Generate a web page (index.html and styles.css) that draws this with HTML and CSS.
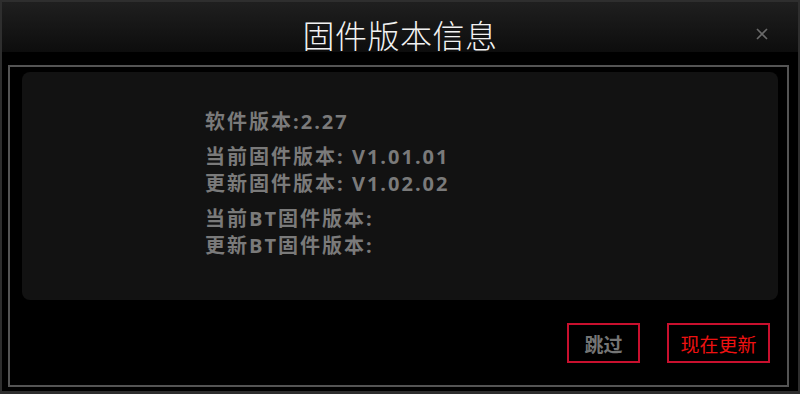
FILE: index.html
```html
<!DOCTYPE html>
<html lang="zh-CN">
<head>
  <meta charset="UTF-8">
  <meta name="viewport" content="width=device-width, initial-scale=1.0">
  <title>固件版本信息</title>
  <link rel="stylesheet" href="styles.css">
</head>
<body>
  <div class="window">
    <div class="header">
      <h1 class="title">固件版本信息</h1>
      <div class="close-btn">
        <svg width="12" height="12" viewBox="0 0 12 12">
          <path d="M1 1 L11 11 M11 1 L1 11" stroke="#6a6a6a" stroke-width="1.6" fill="none"/>
        </svg>
      </div>
    </div>
    <div class="frame">
      <div class="panel">
        <div class="info">
          <div class="group">
            <div class="line">软件版本:2.27</div>
          </div>
          <div class="group">
            <div class="line">当前固件版本: V1.01.01</div>
            <div class="line">更新固件版本: V1.02.02</div>
          </div>
          <div class="group">
            <div class="line">当前BT固件版本:</div>
            <div class="line">更新BT固件版本:</div>
          </div>
        </div>
      </div>
      <div class="actions">
        <button class="btn btn-skip">跳过</button>
        <button class="btn btn-update">现在更新</button>
      </div>
    </div>
  </div>
</body>
</html>
```

FILE: styles.css
```css
body {
  margin: 0;
  background-color: #000;
  font-family: "Noto Sans CJK SC", "Noto Sans", sans-serif;
}
.window {
  width: 800px;
  height: 394px;
  box-sizing: border-box;
  border: 2px solid #2e2e2e;
  border-bottom-width: 3px;
  background-color: #000;
  display: flex;
  flex-direction: column;
}
.header {
  height: 50px;
  position: relative;
  background: linear-gradient(#1f1f1f, #0d0d0d);
  display: flex;
  justify-content: center;
}
.title {
  margin: 0;
  padding-top: 12px;
  font-size: 32px;
  font-weight: 300;
  line-height: 40px;
  letter-spacing: 0.5px;
  color: #f2f2f2;
}
.close-btn {
  position: absolute;
  right: 30px;
  top: 26px;
  width: 12px;
  height: 12px;
}
.close-btn svg {
  display: block;
}
.frame {
  margin: 13px 9px 4px 6px;
  flex: 1;
  border: 2px solid #545454;
  display: flex;
  flex-direction: column;
}
.panel {
  margin: 5px 9px 0 12px;
  height: 228px;
  box-sizing: border-box;
  background-color: #121212;
  border-radius: 8px;
  padding: 36px 0 0 183px;
}
.info {
  display: flex;
  flex-direction: column;
  gap: 8px;
}
.line {
  font-family: "Open Sans", "Noto Sans CJK SC", sans-serif;
  font-size: 20px;
  font-weight: 700;
  line-height: 27px;
  letter-spacing: 2px;
  color: #7a7a7a;
}
.actions {
  display: flex;
  justify-content: flex-end;
  gap: 27px;
  margin: 23px 17px 0 0;
}
.btn {
  height: 40px;
  box-sizing: border-box;
  background: #000;
  border: 2px solid #c8102e;
  font-family: "Noto Sans CJK SC", sans-serif;
  font-size: 19px;
  padding: 0;
  cursor: pointer;
}
.btn-skip {
  width: 73px;
  color: #757575;
  font-weight: 700;
}
.btn-update {
  width: 103px;
  color: #ee1111;
  font-weight: 400;
}
```
